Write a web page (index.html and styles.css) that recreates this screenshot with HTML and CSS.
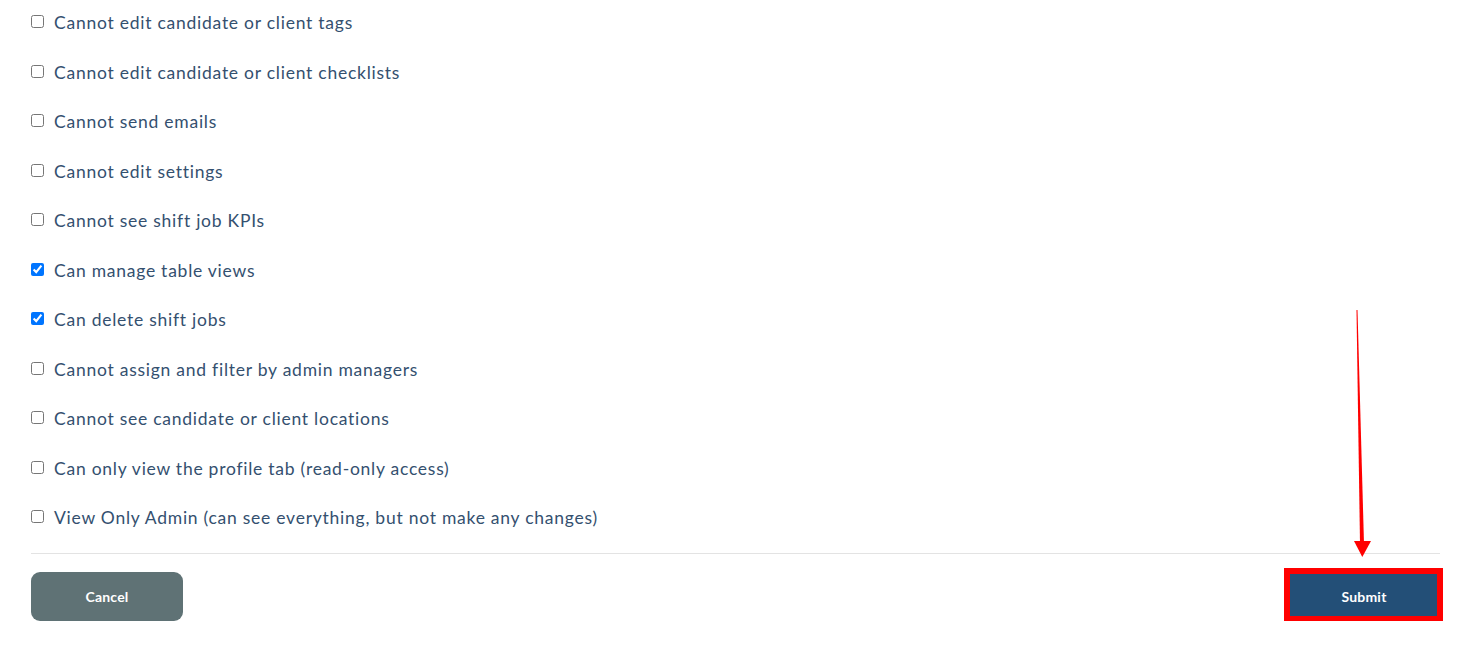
FILE: index.html
```html
<!DOCTYPE html>
<html>
<head>
<meta charset="utf-8">
<link rel="stylesheet" href="styles.css">
</head>
<body>
<div class="page">
  <ul class="perms">
    <li class="perm"><input type="checkbox" class="cb"><span>Cannot edit candidate or client tags</span></li>
    <li class="perm"><input type="checkbox" class="cb"><span>Cannot edit candidate or client checklists</span></li>
    <li class="perm"><input type="checkbox" class="cb"><span>Cannot send emails</span></li>
    <li class="perm"><input type="checkbox" class="cb"><span>Cannot edit settings</span></li>
    <li class="perm"><input type="checkbox" class="cb"><span>Cannot see shift job KPIs</span></li>
    <li class="perm"><input type="checkbox" class="cb" checked><span>Can manage table views</span></li>
    <li class="perm"><input type="checkbox" class="cb" checked><span>Can delete shift jobs</span></li>
    <li class="perm"><input type="checkbox" class="cb"><span>Cannot assign and filter by admin managers</span></li>
    <li class="perm"><input type="checkbox" class="cb"><span>Cannot see candidate or client locations</span></li>
    <li class="perm"><input type="checkbox" class="cb"><span>Can only view the profile tab (read-only access)</span></li>
    <li class="perm"><input type="checkbox" class="cb"><span>View Only Admin (can see everything, but not make any changes)</span></li>
  </ul>
  <div class="footer">
    <button class="btn btn-cancel">Cancel</button>
    <div class="submit-wrap">
      <button class="btn btn-submit">Submit</button>
      <div class="highlight"></div>
    </div>
  </div>
</div>
<svg class="arrow" width="1478" height="649" viewBox="0 0 1478 649">
  <polygon points="1356.5,310 1357.5,310 1364,544 1360,544" fill="#ff0000"/>
  <polygon points="1354,541 1371,541 1362.3,557" fill="#ff0000"/>
</svg>
</body>
</html>
```

FILE: styles.css
```css
html, body {
  margin: 0;
  padding: 0;
  background: #ffffff;
}
body {
  font-family: "Lato", "Noto Sans", sans-serif;
  color: #34506f;
}
.page {
  padding: 10px 38px 0 31px;
}
.perms {
  list-style: none;
  margin: 0;
  padding: 0;
  display: flex;
  flex-direction: column;
  gap: 24.5px;
}
.perm {
  display: flex;
  align-items: center;
  height: 25px;
  font-size: 17.5px;
  letter-spacing: 0.75px;
}
.cb {
  width: 13px;
  height: 13px;
  margin: 0 10px 0 0;
  position: relative;
  top: -1px;
}
.footer {
  margin-top: 23px;
  border-top: 1px solid #e3e3e3;
  padding-top: 18px;
  display: flex;
  justify-content: space-between;
  align-items: center;
}
.btn {
  width: 152px;
  height: 49px;
  border: none;
  color: #ffffff;
  font-family: "Lato", "Noto Sans", sans-serif;
  font-weight: 700;
  font-size: 14px;
  letter-spacing: 0.2px;
}
.btn-cancel {
  background: #5f7275;
  border-radius: 9px;
}
.submit-wrap {
  position: relative;
}
.btn-submit {
  background: #234f77;
  border-radius: 2px;
  display: block;
}
.highlight {
  position: absolute;
  left: -4px;
  top: -4px;
  width: 147px;
  height: 42px;
  border: 6px solid #ff0000;
  pointer-events: none;
}
.arrow {
  position: absolute;
  left: 0;
  top: 0;
  pointer-events: none;
}
```
